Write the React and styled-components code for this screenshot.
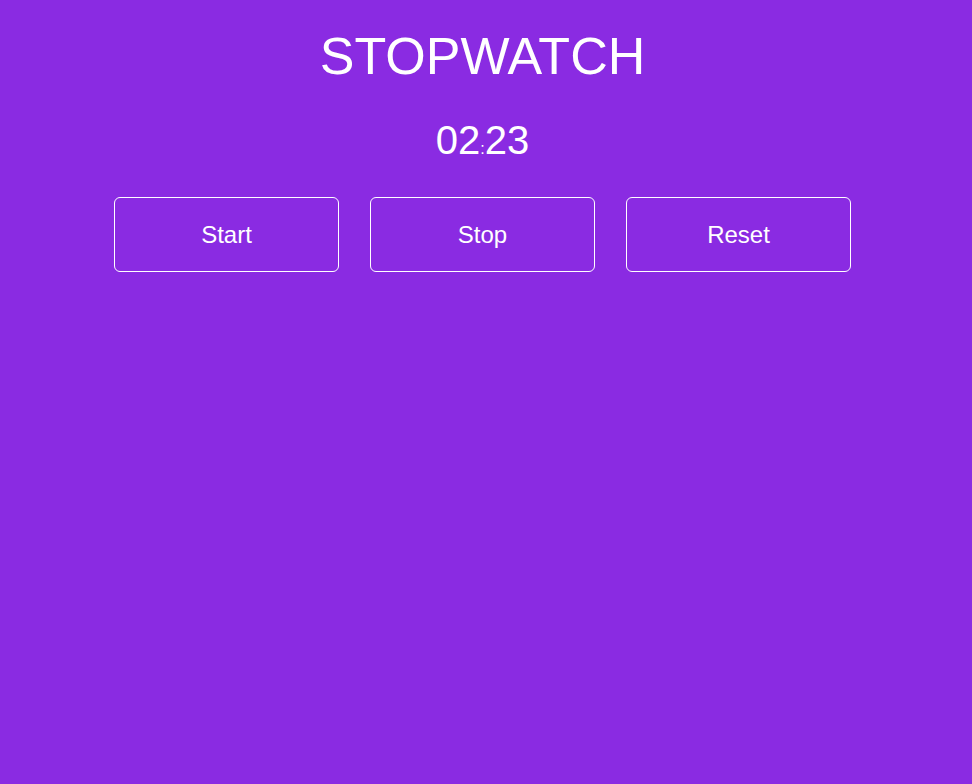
import React from "react";
import styled, { createGlobalStyle } from "styled-components";

const GlobalStyle = createGlobalStyle`
  html, body {
    margin: 0;
    padding: 0;
    background: #8a2be2;
  }
  body {
    font-family: "Liberation Sans", Arial, sans-serif;
    color: #ffffff;
  }
`;

const Page = styled.div`
  min-height: 784px;
  background: #8a2be2;
  display: flex;
  flex-direction: column;
  align-items: center;
  padding: 30px 7px 0 0;
  box-sizing: border-box;
`;

const Title = styled.h1`
  margin: 0;
  font-size: 52px;
  line-height: 52px;
  font-weight: 400;
  color: #ffffff;
`;

const Time = styled.div`
  margin-top: 38px;
  font-size: 40px;
  line-height: 40px;
  height: 40px;
  color: #ffffff;
`;

const Colon = styled.span`
  font-size: 16px;
  line-height: 0;
`;

const Buttons = styled.div`
  margin-top: 37px;
  display: flex;
  gap: 31px;
`;

const Button = styled.button`
  width: 225px;
  height: 75px;
  box-sizing: border-box;
  background: transparent;
  border: 1px solid #ffffff;
  border-radius: 6px;
  color: #ffffff;
  font-family: "Liberation Sans", Arial, sans-serif;
  font-size: 24px;
  cursor: pointer;
  padding: 0;
`;

export default function App() {
  return (
    <>
      <GlobalStyle />
      <Page>
        <Title>STOPWATCH</Title>
        <Time>
          02<Colon>:</Colon>23
        </Time>
        <Buttons>
          <Button>Start</Button>
          <Button>Stop</Button>
          <Button>Reset</Button>
        </Buttons>
      </Page>
    </>
  );
}
